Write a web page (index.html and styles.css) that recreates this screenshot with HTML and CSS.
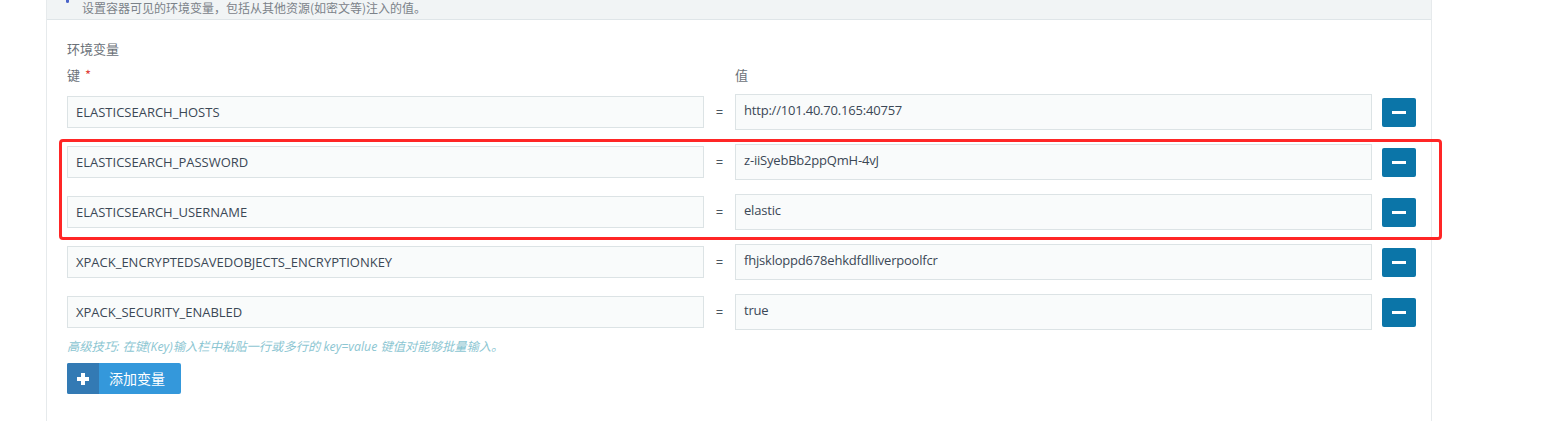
FILE: index.html
```html
<!DOCTYPE html>
<html lang="zh">
<head>
<meta charset="utf-8">
<link rel="stylesheet" href="styles.css">
</head>
<body>
<div class="panel">
  <div class="info">
    <span class="info-icon"></span>
    <span class="info-text">设置容器可见的环境变量，包括从其他资源(如密文等)注入的值。</span>
  </div>
  <div class="body">
    <div class="section-title">环境变量</div>
    <div class="head">
      <div class="head-key">键 <span class="req">*</span></div>
      <div class="head-eq"></div>
      <div class="head-val">值</div>
      <div class="head-btn"></div>
    </div>
    <div class="rows">
      <div class="row">
        <div class="key">ELASTICSEARCH_HOSTS</div>
        <div class="eq">=</div>
        <div class="val">http://101.40.70.165:40757</div>
        <button class="minus"><span></span></button>
      </div>
      <div class="group">
        <div class="row">
          <div class="key">ELASTICSEARCH_PASSWORD</div>
          <div class="eq">=</div>
          <div class="val">z-iiSyebBb2ppQmH-4vJ</div>
          <button class="minus"><span></span></button>
        </div>
        <div class="row">
          <div class="key">ELASTICSEARCH_USERNAME</div>
          <div class="eq">=</div>
          <div class="val">elastic</div>
          <button class="minus"><span></span></button>
        </div>
      </div>
      <div class="row">
        <div class="key">XPACK_ENCRYPTEDSAVEDOBJECTS_ENCRYPTIONKEY</div>
        <div class="eq">=</div>
        <div class="val">fhjskloppd678ehkdfdlliverpoolfcr</div>
        <button class="minus"><span></span></button>
      </div>
      <div class="row">
        <div class="key">XPACK_SECURITY_ENABLED</div>
        <div class="eq">=</div>
        <div class="val">true</div>
        <button class="minus"><span></span></button>
      </div>
    </div>
    <div class="tip">高级技巧: 在键(Key)输入栏中粘贴一行或多行的 key=value 键值对能够批量输入。</div>
    <button class="add"><span class="add-icon"><span class="plus"></span></span><span class="add-text">添加变量</span></button>
  </div>
</div>
</body>
</html>
```
FILE: styles.css
```css
html, body {
  margin: 0;
  padding: 0;
  background: #ffffff;
  font-family: "Open Sans", "Noto Sans CJK SC", sans-serif;
  color: #3b4856;
}
.panel {
  margin-left: 46px;
  width: 1386px;
  height: 421px;
  box-sizing: border-box;
  border-left: 1px solid #e6eaec;
  border-right: 1px solid #e6eaec;
}
.info {
  height: 19px;
  background: #f1f4f5;
  border-bottom: 1px solid #dfe5e8;
  display: flex;
  align-items: flex-start;
  overflow: hidden;
}
.info-icon {
  width: 3px;
  height: 3px;
  background: #4a63c9;
  margin-left: 19px;
  border-radius: 0 0 2px 2px;
}
.info-text {
  margin-left: 13px;
  font-size: 12px;
  line-height: 16px;
  color: #7b8289;
  font-family: "Noto Sans CJK SC", sans-serif;
}
.body {
  padding: 20px 15px 0 20px;
}
.section-title {
  font-size: 13px;
  line-height: 18px;
  color: #6b7178;
  font-family: "Noto Sans CJK SC", sans-serif;
}
.head {
  display: flex;
  margin-top: 8px;
  font-size: 13px;
  line-height: 18px;
  color: #6b7178;
  font-family: "Noto Sans CJK SC", sans-serif;
}
.head-key { width: 637px; }
.head-eq { width: 31px; }
.head-val { width: 637px; }
.req { color: #e0413a; margin-left: 2px; }
.rows {
  margin-top: 10px;
  display: flex;
  flex-direction: column;
  gap: 14px;
}
.group {
  position: relative;
  display: flex;
  flex-direction: column;
  gap: 14px;
}
.group::after {
  content: "";
  position: absolute;
  left: -8px;
  top: -5px;
  right: -26px;
  bottom: -10px;
  border: 3px solid #ff2626;
  border-radius: 4px;
  pointer-events: none;
}
.row {
  display: flex;
  align-items: center;
  height: 36px;
}
.key, .val {
  box-sizing: border-box;
  background: #f9fbfb;
  border: 1px solid #dce3e5;
  font-size: 13px;
  color: #3b4856;
  padding-left: 8px;
  display: flex;
  align-items: center;
}
.key {
  width: 637px;
  height: 32px;
}
.val {
  width: 637px;
  height: 36px;
  padding-bottom: 5px;
  letter-spacing: -0.2px;
}
.eq {
  width: 31px;
  text-align: center;
  font-size: 13px;
  color: #4a5560;
}
.minus {
  margin-left: 10px;
  width: 34px;
  height: 29px;
  border: none;
  border-radius: 2px;
  background: #0b75a8;
  padding: 0;
  display: flex;
  align-items: center;
  justify-content: center;
}
.minus span {
  width: 14px;
  height: 3px;
  background: #ffffff;
}
.tip {
  margin-top: 9px;
  font-size: 12.3px;
  line-height: 16px;
  font-style: italic;
  color: #8cc6d2;
  font-family: "Open Sans", "Noto Sans CJK SC", sans-serif;
}
.add {
  margin-top: 8px;
  display: flex;
  height: 31px;
  width: 114px;
  padding: 0;
  border: none;
  border-radius: 2px;
  overflow: hidden;
  background: #3498db;
  cursor: pointer;
}
.add-icon {
  width: 32px;
  height: 31px;
  background: #337ab4;
  display: flex;
  align-items: center;
  justify-content: center;
}
.plus {
  width: 12px;
  height: 12px;
  background:
    linear-gradient(#fff, #fff) center / 12px 4px no-repeat,
    linear-gradient(#fff, #fff) center / 4px 12px no-repeat;
}
.add-text {
  flex: 1;
  color: #ffffff;
  font-size: 14px;
  line-height: 31px;
  font-family: "Noto Sans CJK SC", sans-serif;
  text-align: left;
  padding-left: 10px;
}
```
